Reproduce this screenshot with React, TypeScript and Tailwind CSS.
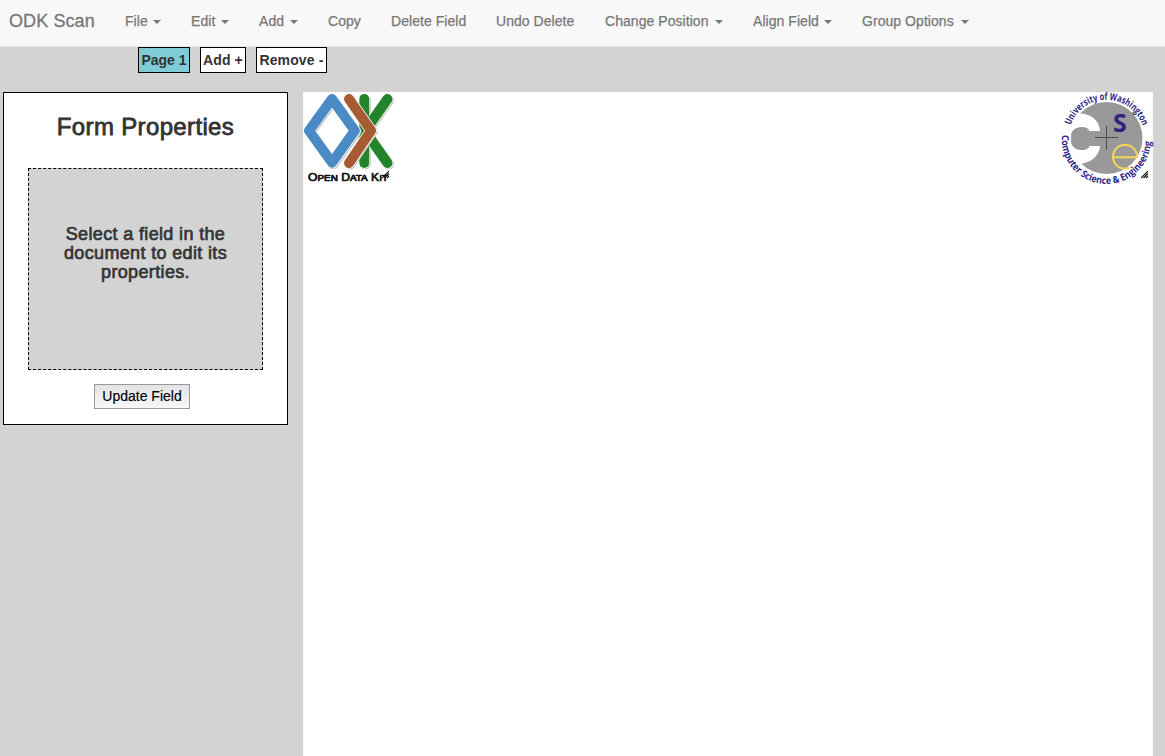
import React from "react";

const items: { label: string; caret: boolean; width: string; text: number }[] = [
  { label: "File", caret: true, width: "w-[66px]", text: 22 },
  { label: "Edit", caret: true, width: "w-[68px]", text: 24 },
  { label: "Add", caret: true, width: "w-[69px]", text: 25 },
  { label: "Copy", caret: false, width: "w-[63px]", text: 33 },
  { label: "Delete Field", caret: false, width: "w-[105px]", text: 75 },
  { label: "Undo Delete", caret: false, width: "w-[109px]", text: 79 },
  { label: "Change Position", caret: true, width: "w-[148px]", text: 104 },
  { label: "Align Field", caret: true, width: "w-[109px]", text: 65 },
  { label: "Group Options", caret: true, width: "w-[140px]", text: 93 },
];

function Grip({ className }: { className: string }) {
  return (
    <svg className={className} width="8" height="8" viewBox="0 0 8 8" stroke="#111" strokeWidth="1.1">
      <path d="M0 7L7 0M2.5 7L7 2.5M5 7L7 5" />
    </svg>
  );
}

function Stroke({ d, color }: { d: string; color: string }) {
  return (
    <>
      <path d={d} stroke="#c4c4bd" strokeWidth="11" transform="translate(1 1)" />
      <path d={d} stroke="#fff" strokeWidth="11.4" />
      <path d={d} stroke={color} strokeWidth="10" />
    </>
  );
}

function OdkLogo() {
  return (
    <svg width="92" height="92" viewBox="0 0 92 92" fill="none" strokeLinecap="round" strokeLinejoin="round">
      <Stroke d="M61.3 7V71" color="#23852b" />
      <Stroke d="M84.5 7L62 39L84.5 71" color="#23852b" />
      <path d="M61.3 8V70" stroke="#23852b" strokeWidth="8.5" />
      <Stroke d="M46 7L68 38.7L46 71" color="#a65b32" />
      <Stroke d="M29 7L51.8 38.7L29 70.7L6 38.7Z" color="#4b8bc5" />
      <text x="5" y="89" fill="#111" fontFamily="Liberation Sans, sans-serif" stroke="#111" strokeWidth=".7" fontSize="11" textLength="80" lengthAdjust="spacingAndGlyphs">
        O<tspan fontSize="9">PEN</tspan> D<tspan fontSize="9">ATA</tspan> K<tspan fontSize="9">IT</tspan>
      </text>
    </svg>
  );
}

function CseLogo() {
  return (
    <svg className="overflow-visible" width="92" height="92" viewBox="0 0 92 92" fill="none">
      <defs>
        <path id="arcTop" d="M9.6 33.3A38 38 0 0 1 81.4 33.3" />
        <path id="arcBottom" d="M1 43A44.7 44.7 0 1 0 90 43" />
      </defs>
      <circle cx="45.5" cy="46" r="36" fill="#999" />
      <path
        d="M7 22Q12 20.5 18 21.3C31 22 38.5 29 39 39H28.3C27 33.5 11 33.5 10.3 43V50C11 59.5 27 60 28.3 54H39C38.5 64 29 72 16 72L7 70Z"
        fill="#fff"
      />
      <path d="M10.3 43C11 33.5 27 33.5 28.3 39V54C27 60 11 59.5 10.3 50Z" fill="#999" />
      <path d="M34 45.5H57M45.5 34V58" stroke="#4d4d4d" />
      <text x="52" y="40" fontFamily="Open Sans, sans-serif" fontWeight="700" fontSize="25" fill="#30217c">S</text>
      <path d="M52 65.3H76A12 12 0 1 0 71 74.5" stroke="#f6d258" strokeWidth="2" />
      <g fill="#33247f" fontFamily="Open Sans, sans-serif" fontWeight="700" fontSize="9.8">
        <text><textPath href="#arcTop" textLength="94" lengthAdjust="spacingAndGlyphs">University of Washington</textPath></text>
        <text><textPath href="#arcBottom" textLength="142" lengthAdjust="spacingAndGlyphs">Computer Science &amp; Engineering</textPath></text>
      </g>
    </svg>
  );
}

export default function App() {
  return (
    <div className="flex h-[756px] w-[1165px] flex-col overflow-hidden bg-[#d3d3d3] font-['Liberation_Sans',Arial,sans-serif] text-sm text-[#333]">
      <nav className="flex h-[47px] shrink-0 border-b border-[#e7e7e7] bg-[#f8f8f8] text-[#777]">
        <a className="w-[125px] pt-[11px] pl-[9px] text-lg leading-5 tracking-[0.1px] whitespace-nowrap [-webkit-text-stroke:0.3px]">ODK Scan</a>
        {items.map((item) => (
          <a key={item.label} className={`flex shrink-0 pt-[11px] leading-5 tracking-[0.05px] whitespace-nowrap [-webkit-text-stroke:0.25px] ${item.width}`}>
            <span style={{ width: item.text }}>{item.label}</span>
            {item.caret && <span className="mt-[9px] ml-1.5 size-0 border-x-4 border-t-4 border-x-transparent border-t-[#777]" />}
          </a>
        ))}
      </nav>
      <div className="flex h-[45px] shrink-0 gap-2.5 pl-[138px] font-bold leading-6">
        <button className="h-[26px] w-[52px] border border-black bg-[#7fccd8] whitespace-nowrap">Page 1</button>
        <button className="h-[26px] w-[46px] border border-black bg-white tracking-[0.1px] whitespace-nowrap">Add +</button>
        <button className="h-[26px] w-[71px] border border-black bg-white tracking-[0.15px] whitespace-nowrap">Remove -</button>
      </div>
      <main className="flex min-h-0 flex-1 items-start gap-[15px] pl-[3px]">
        <aside className="flex h-[333px] w-[285px] shrink-0 flex-col border border-black bg-white">
          <h3 className="mt-[21px] text-center text-2xl leading-[26px] tracking-[0.35px] [-webkit-text-stroke:0.8px]">Form Properties</h3>
          <div className="mt-7 ml-6 h-[202px] w-[235px] border border-dashed border-black bg-[#d3d3d3] pt-14 text-center text-lg leading-[19px] tracking-[0.35px] [-webkit-text-stroke:0.65px]">
            <p>Select a field in the<br />document to edit its<br />properties.</p>
          </div>
          <button className="mt-3.5 ml-[90px] h-[25px] w-24 border border-[#999] bg-linear-to-b from-[#e2e2e2] to-[#f8f8f8] pb-0.5 text-black [-webkit-text-stroke:0.15px]">Update Field</button>
        </aside>
        <section className="flex w-[850px] shrink-0 justify-between self-stretch bg-white">
          <div className="relative size-[92px]"><OdkLogo /><Grip className="absolute top-[79px] left-[79px]" /></div>
          <div className="relative size-[92px]"><CseLogo /><Grip className="absolute top-[79px] left-[80px]" /></div>
        </section>
      </main>
    </div>
  );
}
